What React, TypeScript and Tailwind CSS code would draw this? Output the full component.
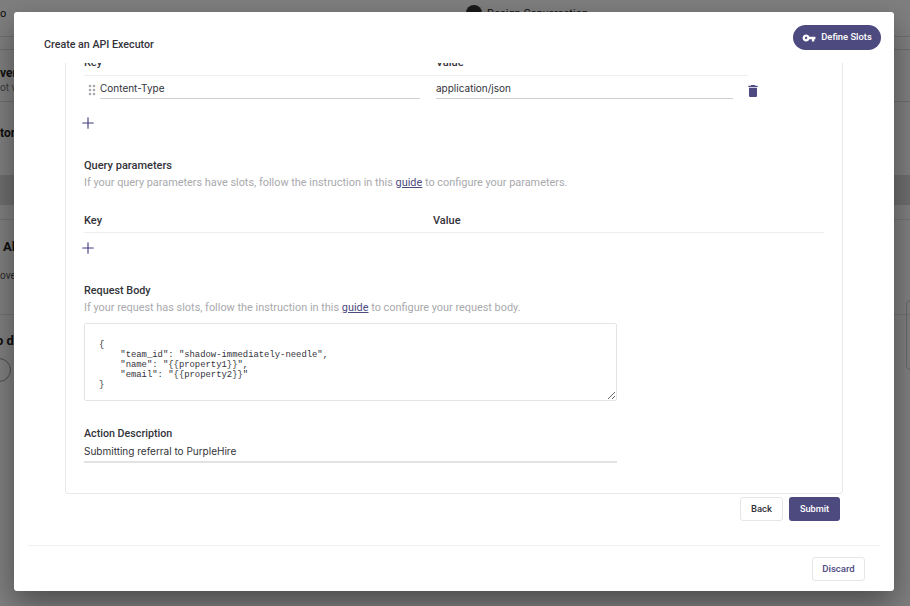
import { Plus } from 'lucide-react'
import { MdDelete, MdDragIndicator, MdVpnKey } from 'react-icons/md'

const BODY = `{
    "team_id": "shadow-immediately-needle",
    "name": "{{property1}}",
    "email": "{{property2}}"
}`

export default function App() {
  return (
    <div className="relative h-[606px] w-[910px] overflow-hidden bg-white font-['Roboto',sans-serif] text-[#33333a]">
      <BackgroundPage />
      <div className="absolute inset-0 bg-black/50" />
      <div className="absolute left-[14px] top-[12px] flex h-[579px] w-[880px] flex-col rounded-[3px] bg-white shadow-[0_12px_30px_rgba(0,0,0,0.4)]">
        <header className="flex h-[51px] shrink-0 items-start justify-between pl-[30px] pr-[13px] pt-[13px]">
          <h1 className="pt-[13px] text-[10.7px] leading-[14px] font-medium">Create an API Executor</h1>
          <button className="flex h-[25px] w-[88px] items-center justify-center gap-[5px] rounded-full bg-[#4d4a80] text-[9.4px] font-medium text-white">
            <MdVpnKey className="size-[14px]" />
            Define Slots
          </button>
        </header>

        <div className="h-[431px] shrink-0 overflow-hidden pl-[51px] pr-[51px]">
          <div className="-mt-[15px] h-[446px] rounded-b-[3px] border border-[#e8e8e8] pl-[18px] pr-[18px]">
            <div className="w-[664px] border-b border-[#eeeeee] pb-[5px] pt-[7px] text-[11px] leading-[14px] font-medium">
              <div className="grid grid-cols-[352px_1fr]">
                <span>Key</span>
                <span>Value</span>
              </div>
            </div>
            <div className="flex h-[23px] w-[680px] items-start">
              <MdDragIndicator className="mt-[6px] size-[16px] text-[#a9a9ad]" />
              <TextLine value="Content-Type" className="w-[320px]" />
              <TextLine value="application/json" className="ml-[16px] w-[297px]" />
              <MdDelete className="ml-[12px] mt-[7px] size-[16px] text-[#4d4a80]" />
            </div>
            <AddButton className="mt-[15px]" />

            <h2 className="mt-[27px] text-[11px] leading-[14px] font-medium">Query parameters</h2>
            <Hint before="If your query parameters have slots, follow the instruction in this " after=" to configure your parameters." />

            <div className="mt-[24px] grid h-[19px] grid-cols-[349px_1fr] border-b border-[#eeeeee] text-[11px] leading-[14px] font-medium">
              <span>Key</span>
              <span>Value</span>
            </div>
            <AddButton className="mt-[6px]" />

            <h2 className="mt-[27px] text-[10.8px] leading-[14px] font-medium">Request Body</h2>
            <Hint before="If your request has slots, follow the instruction in this " after=" to configure your request body." />

            <textarea
              readOnly
              value={BODY}
              className="mt-[8px] block h-[78px] w-[533px] rounded-[2px] border border-[#e4e4e4] px-[14px] pb-[10px] pt-[16px] font-['Liberation_Mono',monospace] text-[8.9px] leading-[10px] text-[#33333a] outline-none"
            />

            <h2 className="mt-[26px] text-[10.7px] leading-[14px] font-medium">Action Description</h2>
            <div className="mt-[3px] w-[533px] border-b-2 border-[#e2e2e2] pb-[2px] font-['Inter',sans-serif] text-[10px] leading-[15px]">
              Submitting referral to PurpleHire
            </div>
          </div>
        </div>

        <div className="flex h-[51px] shrink-0 justify-end gap-[6px] pr-[54px] pt-[3px]">
          <button className="h-[24px] w-[43px] rounded-[3px] border border-[#e6e6e6] bg-white text-[9.5px] font-medium">Back</button>
          <button className="h-[24px] w-[51px] rounded-[3px] bg-[#4d4a80] text-[9.2px] font-medium text-white">Submit</button>
        </div>

        <footer className="mx-[14px] flex flex-1 justify-end border-t border-[#f1f1f1] pr-[15px] pt-[11px]">
          <button className="h-[24px] w-[53px] rounded-[3px] border border-[#e6e6e6] bg-white text-[9.6px] font-medium text-[#4d4a80]">Discard</button>
        </footer>
      </div>
    </div>
  )
}

function TextLine({ value, className }: { value: string; className: string }) {
  return (
    <div className={`h-[23px] shrink-0 border-b border-[#cfcfcf] font-['Inter',sans-serif] text-[10px] leading-[24px] ${className}`}>
      {value}
    </div>
  )
}

function AddButton({ className }: { className: string }) {
  return <Plus className={`-ml-[5px] size-[18px] text-[#3f3c80] ${className}`} strokeWidth={1.5} />
}

function Hint({ before, after }: { before: string; after: string }) {
  return (
    <p className="mt-[3px] text-[10.9px] leading-[14px] text-[#a9a9ad]">
      {before}
      <span className="text-[#4d4a80] underline">guide</span>
      {after}
    </p>
  )
}

function BackgroundPage() {
  return (
    <div className="flex h-full flex-col text-[#222222]">
      <div className="flex h-[37px] items-start border-b border-[#dddddd] pt-[5px]">
        <span className="w-[466px] pt-[1px] text-[11px]">o</span>
        <span className="size-[16px] rounded-full bg-[#333333]" />
        <span className="ml-[5px] pt-[1px] text-[11px]">Design Conversation</span>
      </div>
      <div className="h-[13px] border-b border-[#dddddd]" />
      <div className="flex h-[52px] flex-col justify-start border-b border-[#dddddd] pt-[15px]">
        <span className="text-[12px] leading-[16px] font-bold">ver</span>
        <span className="text-[10px] leading-[14px] text-[#777777]">ot v</span>
      </div>
      <div className="h-[73px] pt-[23px] text-[12px] leading-[16px] font-bold">tor</div>
      <div className="h-[30px] bg-[#dddddd]" />
      <div className="h-[15px] border-b border-[#e4e4e4]" />
      <div className="h-[95px] border-b border-[#e4e4e4] pl-[3px] pt-[19px]">
        <p className="text-[13px] leading-[16px] font-bold">Al</p>
        <p className="-ml-[3px] mt-[14px] text-[10px] leading-[14px] text-[#555555]">ove</p>
      </div>
      <div className="pt-[18px]">
        <p className="-ml-[4px] text-[13px] leading-[16px] font-bold">o d</p>
        <div className="-ml-[13px] mt-[9px] size-[24px] rounded-full border border-[#999999]" />
      </div>
      <div className="absolute left-[906px] top-[300px] h-[70px] w-[20px] rounded-[4px] border border-[#cccccc]" />
    </div>
  )
}
